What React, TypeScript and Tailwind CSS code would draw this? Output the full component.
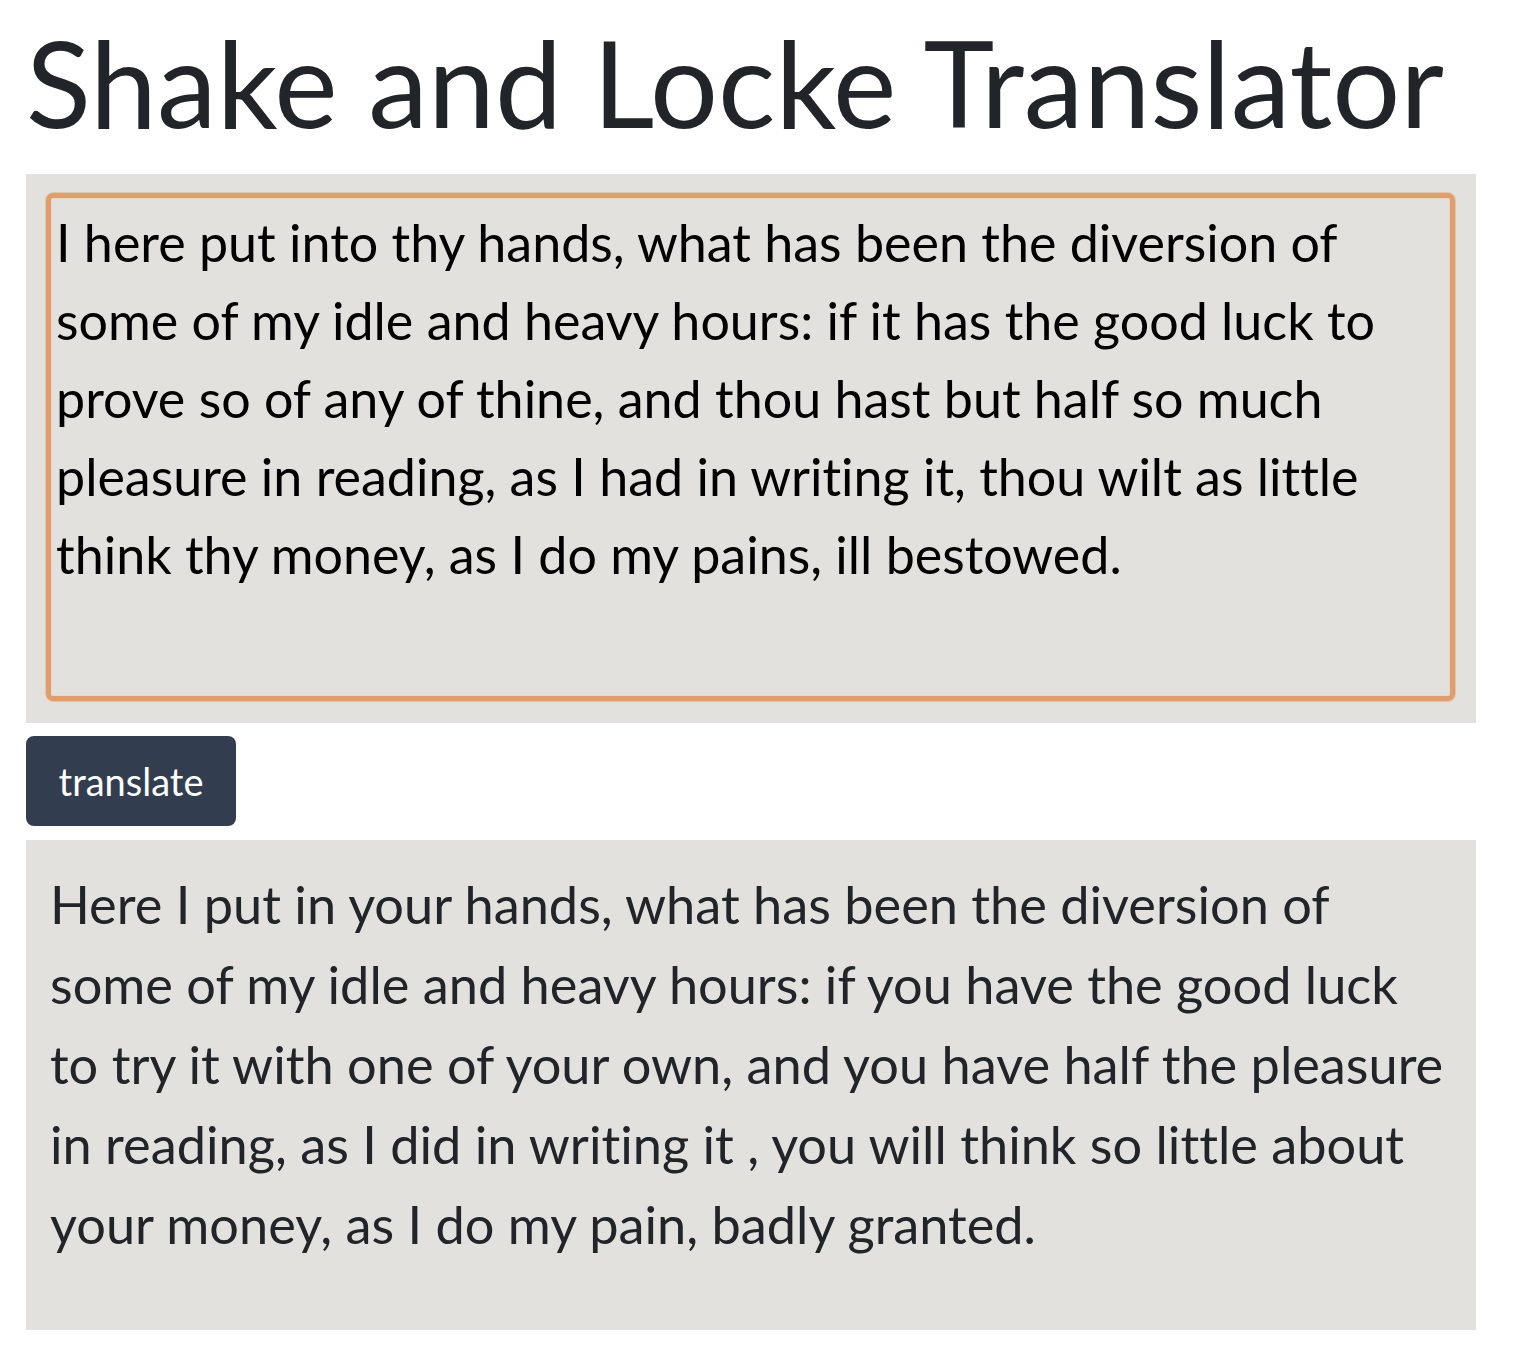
export default function App() {
  return (
    <div className="w-[1520px] h-[1364px] bg-white px-[26px]" style={{ fontFamily: "Lato, 'Noto Sans', sans-serif" }}>
      <h1 className="text-[120px] leading-none text-[#212529] pt-[22px] pb-[32px] m-0 whitespace-nowrap">
        Shake and Locke Translator
      </h1>
      <div className="w-[1450px] bg-[#e2e1de] pt-[18px] pb-[21px] pl-[19px] pr-[20px]">
        <div className="h-[510px] rounded-[8px] border border-[#e5c5a9] p-0">
          <div className="h-full rounded-[7px] border-[5px] border-[#e09e6e]">
            <textarea
              className="block w-full h-full resize-none bg-transparent border border-[#e8d8ca] rounded-[3px] outline-none pl-[4px] pr-[2px] pt-[4px] text-[52px] leading-[78px] text-black [font-variant-ligatures:none]"
              style={{ fontFamily: "Lato, 'Noto Sans', sans-serif" }}
              defaultValue="I here put into thy hands, what has been the diversion of some of my idle and heavy hours: if it has the good luck to prove so of any of thine, and thou hast but half so much pleasure in reading, as I had in writing it, thou wilt as little think thy money, as I do my pains, ill bestowed."
            />
          </div>
        </div>
      </div>
      <button className="mt-[13px] w-[210px] h-[90px] rounded-[8px] bg-[#323e50] text-white text-[38px] leading-none [font-variant-ligatures:none]">
        translate
      </button>
      <div className="mt-[14px] w-[1450px] h-[490px] bg-[#e2e1de] pl-[24px] pr-[30px] pt-[24px]">
        <p className="text-[52.3px] leading-[80px] text-[#212529] m-0 [font-variant-ligatures:none]">
          Here I put in your hands, what has been the diversion of some of my idle and heavy hours: if you have the good luck to try it with one of your own, and you have half the pleasure in reading, as I did in writing it , you will think so little about your money, as I do my pain, badly granted.
        </p>
      </div>
    </div>
  );
}
